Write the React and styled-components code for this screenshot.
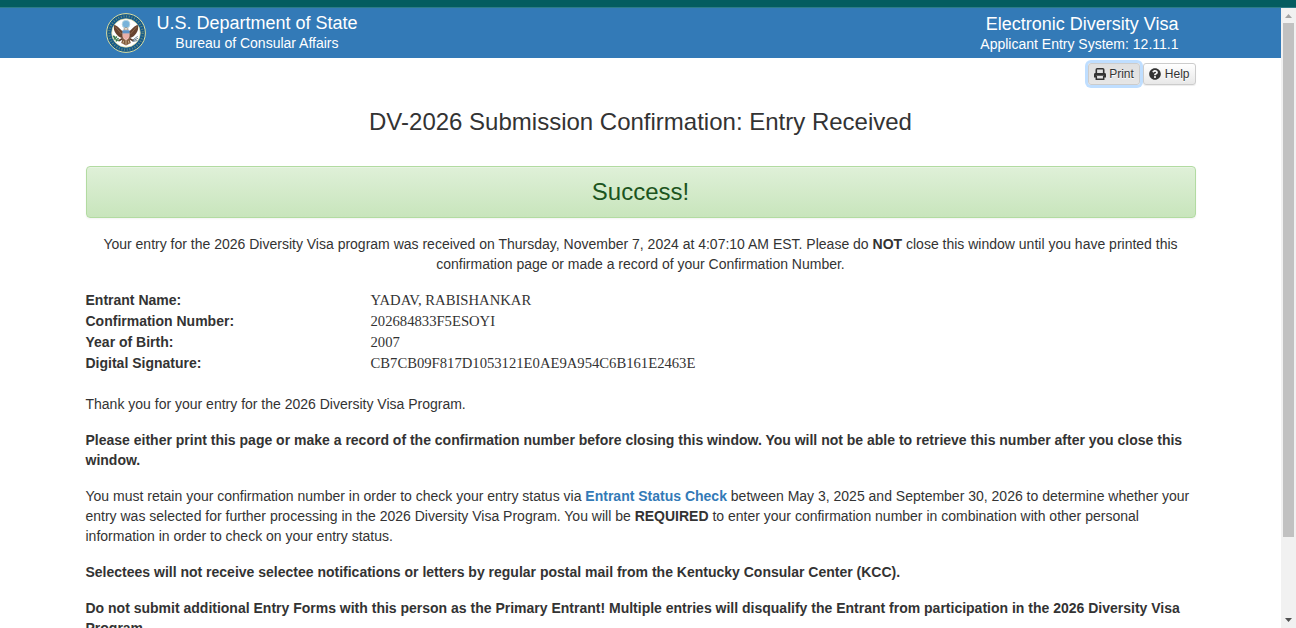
import React from "react";
import styled, { createGlobalStyle, css } from "styled-components";
import { FaQuestionCircle } from "react-icons/fa";

const Global = createGlobalStyle`
  *, *::before, *::after { box-sizing: border-box; }
  html, body, #root { height: 100%; }
  body {
    margin: 0;
    overflow: hidden;
    background: #fff;
    color: #333;
    font: 14px/20px "Liberation Sans", Arial, sans-serif;
  }
`;

const Page = styled.div`
  height: 628px;
  display: flex;
  flex-direction: column;
  overflow: hidden;
`;

const TopStrip = styled.div`
  flex: none;
  height: 8px;
  background: #045c60;
  border-bottom: 1px solid #2d7b87;
`;

const Frame = styled.div`
  flex: 1;
  min-height: 0;
  display: flex;
`;

const Content = styled.div`
  flex: 1;
  min-width: 0;
  overflow: hidden;
`;

const Header = styled.header`
  height: 50px;
  padding: 5px 102.5px 0 106px;
  display: flex;
  justify-content: space-between;
  background: #337ab7;
  color: #fff;
`;

const Brand = styled.div`
  display: flex;
  gap: 10.4px;
`;

const HeaderText = styled.div`
  text-align: ${(p) => p.$align};
  padding-top: ${(p) => p.$top}px;
`;

const HeaderTitle = styled.div`
  font-size: 18px;
  line-height: 20px;
`;

const HeaderSub = styled.div`
  font-size: 14px;
  line-height: 20px;
`;

const Container = styled.main`
  width: 1110px;
  margin: 0 auto;
`;

const Toolbar = styled.div`
  display: flex;
  justify-content: flex-end;
  gap: 3.5px;
  padding-top: 5px;
`;

const Button = styled.button`
  display: flex;
  align-items: center;
  gap: 3.5px;
  height: 22px;
  padding: 0 5px;
  border: 1px solid #ccc;
  border-radius: 3px;
  background: linear-gradient(#fff, #e8e8e8);
  color: #333;
  font: 12px/18px "Liberation Sans", Arial, sans-serif;
  text-shadow: 0 1px 0 #fff;
  box-shadow: inset 0 1px 0 rgba(255, 255, 255, 0.15), 0 1px 1px rgba(0, 0, 0, 0.075);
  ${(p) =>
    p.$focused &&
    css`
      background: linear-gradient(#e0e0e0, #e6e6e6);
      box-shadow: 0 0 0 3px #bfdeff;
    `}
`;

const Title = styled.h1`
  margin: 24px 0 0;
  font-size: 24px;
  line-height: 26px;
  font-weight: 400;
  text-align: center;
`;

const Alert = styled.div`
  height: 52px;
  margin: 31px 0 16px;
  border: 1px solid #b2dba1;
  border-radius: 4px;
  background: linear-gradient(#dff0d8, #c8e5bc);
  box-shadow: inset 0 1px 0 rgba(255, 255, 255, 0.25), 0 1px 2px rgba(0, 0, 0, 0.05);
  color: #1c5420;
  font-size: 24px;
  line-height: 50px;
  text-align: center;
`;

const Paragraph = styled.p`
  margin: 0 0 16px;
  text-align: ${(p) => (p.$center ? "center" : "left")};
  font-weight: ${(p) => (p.$bold ? 700 : 400)};
`;

const Details = styled.dl`
  display: grid;
  grid-template-columns: 285px 1fr;
  grid-auto-rows: 21px;
  margin: 0 0 20px;
`;

const Label = styled.dt`
  font-weight: 700;
`;

const Value = styled.dd`
  margin: 0;
  font-family: "Liberation Serif", "Times New Roman", serif;
  font-size: 11pt;
`;

const Link = styled.a`
  color: #337ab7;
  font-weight: 700;
  text-decoration: none;
`;

const Scrollbar = styled.div`
  flex: none;
  width: 15px;
  display: flex;
  flex-direction: column;
  align-items: center;
  background: #f1f1f1;
`;

const ScrollArrow = styled.svg`
  flex: none;
  width: 15px;
  height: 15px;
  fill: ${(p) => p.$color};
`;

const Track = styled.div`
  flex: 1;
  width: 11px;
`;

const Thumb = styled.div`
  height: 514px;
  background: #c1c1c1;
`;

const Art = styled.svg`
  display: block;
  flex: none;
`;

function PrintIcon() {
  return (
    <Art width="12" height="12" viewBox="0 0 12 12" fill="none">
      <path d="M2.3 5.4V1.7Q2.3 0.8 3.2 0.8H8.8Q9.7 0.8 9.7 1.7V5.4" stroke="#333" strokeWidth="1.6" />
      <path d="M0 6.4Q0 5 1.4 5H10.6Q12 5 12 6.4V9.4H9.7V7.8H2.3V9.4H0Z" fill="#333" />
      <path d="M2.3 8V11.2H9.7V8" stroke="#333" strokeWidth="1.5" />
    </Art>
  );
}

function Seal() {
  return (
    <Art width="40" height="40" viewBox="0 0 40 40">
      <circle cx="20" cy="20" r="19.4" fill="#14598a" stroke="#dfe0a0" strokeWidth="1" />
      <circle cx="20" cy="20" r="16.7" fill="none" stroke="#a9b374" strokeWidth="2.2" strokeDasharray="1 1.7" opacity="0.55" />
      <circle cx="20" cy="20" r="14.3" fill="#fff" stroke="#d9d796" strokeWidth="0.7" />
      <g transform="translate(20 20.5) scale(1.17) translate(-20 -20.8)">
        <circle cx="20" cy="12.8" r="3.3" fill="#79b3da" stroke="#b9d5de" strokeWidth="0.7" />
        <path d="M18 19.5C15.2 17.8 13.8 15 10 13.4C9.2 16.2 9.6 18.4 11.2 20.6C12.6 22.8 14.5 24.3 17.3 24.9ZM22 19.5C24.8 17.8 26.2 15 30 13.4C30.8 16.2 30.4 18.4 28.8 20.6C27.4 22.8 25.5 24.3 22.7 24.9Z" fill="#68432f" />
        <path d="M10.8 15L16.2 21.3M29.2 15L23.8 21.3" stroke="#9c7454" strokeWidth="0.6" />
        <path d="M17.5 24L15.9 29L20 31L24.1 29L22.5 24Z" fill="#80583a" />
        <path d="M20 26V30.5M18 27L17.4 29.4M22 27L22.6 29.4" stroke="#e1cfad" strokeWidth="0.6" />
        <path d="M17.2 25L13.8 27M22.8 25L26.2 27" stroke="#5f3c2a" strokeWidth="1.5" />
        <path d="M18.3 17.8V16.8Q18.5 15.8 20 15.8Q21.5 15.8 21.7 16.8V17.8Z" fill="#f4f0e5" stroke="#86654a" strokeWidth="0.5" />
        <path d="M17 20H23V23C23 24.8 21.5 25.8 20 26.5C18.5 25.8 17 24.8 17 23Z" fill="#f3d6d0" />
        <path d="M18.3 20.5V25M20 20.5V26M21.7 20.5V25" stroke="#dc7770" strokeWidth="0.7" />
        <path d="M17 18H23V20.7H17Z" fill="#5e93c8" />
        <path d="M14 27.2C11.8 26.4 10.2 24.8 9.6 23" fill="none" stroke="#39794b" strokeWidth="1" />
        <path d="M10 24.2L9.2 22.7M11 25.6L9.5 25.2M12.4 26.8L11.2 27.2M11.2 24.8L12 23.3M12.6 26L13.6 24.8" stroke="#39794b" strokeWidth="1.3" />
        <path d="M25.5 26.6L30 23.2M25.7 27.2L30.3 24.8M25.8 27.6L29.7 26.8" stroke="#566c7b" strokeWidth="0.7" />
      </g>
    </Art>
  );
}

const details = [
  ["Entrant Name:", "YADAV, RABISHANKAR"],
  ["Confirmation Number:", "202684833F5ESOYI"],
  ["Year of Birth:", "2007"],
  ["Digital Signature:", "CB7CB09F817D1053121E0AE9A954C6B161E2463E"],
];

export default function App() {
  return (
    <Page>
      <Global />
      <TopStrip />
      <Frame>
        <Content>
          <Header>
            <Brand>
              <Seal />
              <HeaderText $align="center" $top={0}>
                <HeaderTitle>U.S. Department of State</HeaderTitle>
                <HeaderSub>Bureau of Consular Affairs</HeaderSub>
              </HeaderText>
            </Brand>
            <HeaderText $align="right" $top={1}>
              <HeaderTitle>Electronic Diversity Visa</HeaderTitle>
              <HeaderSub>Applicant Entry System: 12.11.1</HeaderSub>
            </HeaderText>
          </Header>
          <Container>
            <Toolbar>
              <Button $focused>
                <PrintIcon />
                Print
              </Button>
              <Button>
                <FaQuestionCircle size={12} />
                Help
              </Button>
            </Toolbar>
            <Title>DV-2026 Submission Confirmation: Entry Received</Title>
            <Alert>Success!</Alert>
            <Paragraph $center>
              Your entry for the 2026 Diversity Visa program was received on Thursday, November 7, 2024 at 4:07:10 AM
              EST. Please do <b>NOT</b> close this window until you have printed this confirmation page or made a
              record of your Confirmation Number.
            </Paragraph>
            <Details>
              {details.map(([label, value]) => (
                <React.Fragment key={label}>
                  <Label>{label}</Label>
                  <Value>{value}</Value>
                </React.Fragment>
              ))}
            </Details>
            <Paragraph>Thank you for your entry for the 2026 Diversity Visa Program.</Paragraph>
            <Paragraph $bold>
              Please either print this page or make a record of the confirmation number before closing this window. You
              will not be able to retrieve this number after you close this window.
            </Paragraph>
            <Paragraph>
              You must retain your confirmation number in order to check your entry status via{" "}
              <Link>Entrant Status Check</Link> between May 3, 2025 and September 30, 2026 to determine whether your
              entry was selected for further processing in the 2026 Diversity Visa Program. You will be{" "}
              <b>REQUIRED</b> to enter your confirmation number in combination with other personal information in order
              to check on your entry status.
            </Paragraph>
            <Paragraph $bold>
              Selectees will not receive selectee notifications or letters by regular postal mail from the Kentucky
              Consular Center (KCC).
            </Paragraph>
            <Paragraph $bold>
              Do not submit additional Entry Forms with this person as the Primary Entrant! Multiple entries will
              disqualify the Entrant from participation in the 2026 Diversity Visa Program.
            </Paragraph>
          </Container>
        </Content>
        <Scrollbar>
          <ScrollArrow $color="#a3a3a3" viewBox="0 0 15 15">
            <path d="M4 10H11L7.5 6Z" />
          </ScrollArrow>
          <Track>
            <Thumb />
          </Track>
          <ScrollArrow $color="#505050" viewBox="0 0 15 15">
            <path d="M4 5H11L7.5 9Z" />
          </ScrollArrow>
        </Scrollbar>
      </Frame>
    </Page>
  );
}
